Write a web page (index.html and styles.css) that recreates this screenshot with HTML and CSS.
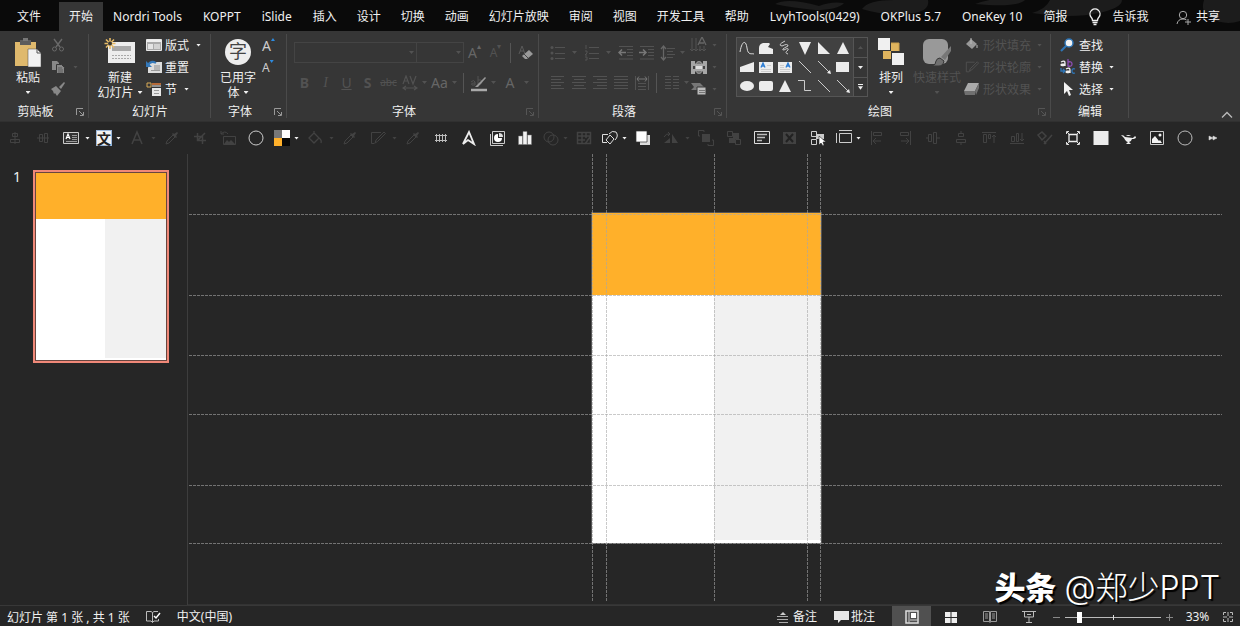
FILE: index.html
```html
<!DOCTYPE html>
<html lang="zh-CN">
<head>
<meta charset="utf-8">
<title>演示文稿</title>
<link rel="stylesheet" href="styles.css">
</head>
<body>
<svg class="sprite" aria-hidden="true">
  <symbol id="dropper" viewBox="0 0 16 16"><path d="M2 14l1-3 6-6 2 2-6 6z" fill="none" stroke="currentColor"/><path d="M8 4l4 4 1-1-1-1 2-3-1-1-3 2-1-1z" fill="currentColor"/></symbol>
  <symbol id="launch" viewBox="0 0 8 8"><path d="M.5 7V.5H7M3 3l4 4M7.500 4v3.500H4" fill="none" stroke="currentColor"/></symbol>
  <symbol id="align" viewBox="0 0 16 16"><path d="M1 1.500h13M1 4.500h10M1 7.500h13M1 10.500h10M1 13.500h13" stroke="currentColor"/></symbol>
  <symbol id="bucket" viewBox="0 0 16 16"><path d="M2 8l5-5 5 5-5 5zM7 3V1M12 8q3 2 2 5" fill="none" stroke="currentColor" stroke-width="1.300"/></symbol>
  <symbol id="pencilbox" viewBox="0 0 16 16"><path d="M11 2.500H1.500v11h3M5 13l1-3 8-8 1.500 1.500-8 8z" fill="none" stroke="currentColor"/></symbol>
</svg>

<nav class="tabs" aria-label="功能区选项卡">
  <svg class="tabs-art" viewBox="0 0 470 31" aria-hidden="true"><path d="M5 4q12-7 44 2 12-5 25-3-6 7-29 7-28-3-40-6zM92 9q6-9 32-9h34q2 10-13 13-28 4-53-4zM205 4q20-8 50-4-8 8-50 4zM280 0q-4 9-18 13 40 6 67 0 23-5 23-13zM434 0q-4 12 6 18 15 8 30 3V0z"/></svg>
  <button class="tab tab-file">文件</button>
  <button class="tab tab-on">开始</button>
  <button class="tab latin">Nordri Tools</button>
  <button class="tab latin">KOPPT</button>
  <button class="tab latin">iSlide</button>
  <button class="tab">插入</button>
  <button class="tab">设计</button>
  <button class="tab">切换</button>
  <button class="tab">动画</button>
  <button class="tab">幻灯片放映</button>
  <button class="tab">审阅</button>
  <button class="tab">视图</button>
  <button class="tab">开发工具</button>
  <button class="tab latin">帮助</button>
  <button class="tab latin">LvyhTools(0429)</button>
  <button class="tab latin">OKPlus 5.7</button>
  <button class="tab latin">OneKey 10</button>
  <button class="tab">简报</button>
  <button class="tab tab-icon"><svg width="14" height="18" viewBox="0 0 14 18"><path d="M4.500 12.500q0-2-1.500-3.500a5 5 0 1 1 8 0q-1.500 1.500-1.500 3.500zM4.500 14.500h5M5.500 16.500h3" fill="none" stroke="currentColor" stroke-width="1.300"/></svg>告诉我</button>
  <button class="tab tab-icon tab-share"><svg width="16" height="16" viewBox="0 0 16 16"><circle cx="7" cy="6" r="3.700" fill="none" stroke="#aaa"/><path d="M1 15q1-5 6-5 2 0 3.500 1M12 10v6M9 13h6" fill="none" stroke="#aaa"/></svg>共享</button>
</nav>

<section class="ribbon" aria-label="开始">
  <div class="group g-clip">
    <div class="body">
      <button class="big"><svg width="28" height="30" viewBox="0 0 28 30"><path d="M1 4h21v24H1z" fill="#dfb96d"/><path d="M6 2h11v5H6z" fill="#5c5c5c"/><path d="M9 0h5v3H9z" fill="#777"/><path d="M14 11h9l4 4v14H14z" fill="#f2f2f2" stroke="#444" stroke-width=".5"/><path d="M23 11v4h4" fill="none" stroke="#555"/></svg><span>粘贴</span><i class="caret"></i></button>
      <div class="list dim">
        <button class="row" aria-label="剪切"><svg width="14" height="14" viewBox="0 0 14 14"><path d="M3 1l6 8M11 1L5 9" stroke="currentColor" stroke-width="1.400"/><circle cx="3.500" cy="11" r="2" fill="none" stroke="currentColor"/><circle cx="10.500" cy="11" r="2" fill="none" stroke="currentColor"/></svg></button>
        <button class="row mid" aria-label="复制"><svg width="14" height="14" viewBox="0 0 14 14"><path d="M1 1h5l2 2v7H1z" fill="currentColor"/><path d="M5.500 4.500h5l3 3v6h-8z" fill="currentColor" stroke="#363636"/><path d="M7 8h4M7 10h5M7 12h5" stroke="#4a4a4a" stroke-width=".7"/></svg><i class="caret faint"></i></button>
        <button class="row mid" aria-label="格式刷"><svg width="14" height="14" viewBox="0 0 14 14"><path d="M0 7l5-3 5 5-4 5-2-3-1 1-1-3z" fill="currentColor"/><path d="M8 5l5-5 1 1-4 6z" fill="currentColor"/></svg></button>
      </div>
    </div>
    <div class="foot"><span>剪贴板</span><button aria-label="剪贴板设置"><svg width="8" height="8"><use href="#launch"/></svg></button></div>
  </div>

  <div class="group g-slides">
    <div class="body">
      <button class="big"><svg width="32" height="30" viewBox="0 0 32 30"><path d="M4 4h27v21H4z" fill="#ededed"/><path d="M8 8h19v5H8z" fill="#a9a9a9"/><path d="M8 17.500h19M8 20.500h19" stroke="#a9a9a9" stroke-dasharray="2 1"/><path d="M6 0v11M.5 5.500h11M2 1.500l8 8M10 1.500l-8 8" stroke="#e5ba66" stroke-width="1.600"/><circle cx="6" cy="5.500" r="2" fill="#363636"/></svg><span>新建</span><span>幻灯片<i class="caret"></i></span></button>
      <div class="list">
        <button class="row"><svg width="16" height="14" viewBox="0 0 16 14"><path d="M.5 1.500h15v11H.5z" fill="#aaa" stroke="#e8e8e8"/><path d="M1 3h14" stroke="#eee" stroke-width="2"/><path d="M2 6h5v5H2z" fill="#e4e4e4"/><path d="M8 6h6v5H8z" fill="#d2d2d2"/></svg>版式<i class="caret"></i></button>
        <button class="row"><svg width="16" height="14" viewBox="0 0 16 14"><path d="M4 2h12v11H2V8z" fill="#ddd"/><path d="M8 5h6v5H8z" fill="#b5b5b5"/><path d="M5 10.500h9" stroke="#999"/><path d="M2 5q3-5 8-2" fill="none" stroke="#3478b9" stroke-width="2"/><path d="M0 1v6h6z" fill="#3478b9"/></svg>重置</button>
        <button class="row"><svg width="16" height="14" viewBox="0 0 16 14"><path d="M1 1h4v4H1z" fill="none" stroke="#d8aa56"/><path d="M6 2h9" stroke="#e07b39" stroke-width="1.500"/><path d="M6 4h9" stroke="#eee"/><path d="M6 6h9v8H6z" fill="#e8e8e8"/><path d="M8 8.500h5M8 11.500h5" stroke="#999"/></svg>节<i class="caret"></i></button>
      </div>
    </div>
    <div class="foot"><span>幻灯片</span></div>
  </div>

  <div class="group g-used">
    <div class="body">
      <button class="big"><b class="disc">字</b><span>已用字</span><span>体<i class="caret"></i></span></button>
      <div class="list">
        <button class="row grow">A<i class="up"></i></button>
        <button class="row grow">A<i class="up down"></i></button>
      </div>
    </div>
    <div class="foot"><span>字体</span><button aria-label="字体设置"><svg width="8" height="8"><use href="#launch"/></svg></button></div>
  </div>

  <div class="group g-font">
    <div class="body stack faint">
      <div class="line">
        <button class="combo combo-name" aria-label="字体名称"><i class="caret"></i></button>
        <button class="combo combo-size" aria-label="字号"><i class="caret"></i></button>
        <button class="ico large soft">A<sup>▴</sup></button>
        <button class="ico">A<sup>▾</sup></button>
        <i class="bar"></i>
        <button class="ico mid" aria-label="清除格式"><svg width="16" height="16" viewBox="0 0 16 16"><path d="M1 9L4 1l3 8M2 6h4" fill="none" stroke="#5a5a5a"/><path d="M4 11l7-6 4 4-6 5H7z" fill="#999"/><path d="M6 9l4 4" stroke="#444"/></svg></button>
      </div>
      <div class="line">
        <button class="ico large"><b>B</b></button>
        <button class="ico large serif"><em>I</em></button>
        <button class="ico large"><u>U</u></button>
        <button class="ico large"><b>S</b></button>
        <button class="ico small"><s>abc</s></button>
        <button class="ico" aria-label="字符间距"><svg width="16" height="16" viewBox="0 0 16 16"><path d="M1 9l3-8 3 8M2 6h4M8 1l3 8 3-8M1 13h14M4 11l-3 2 3 2M12 11l3 2-3 2" fill="none" stroke="currentColor" stroke-width="1.200"/></svg></button><i class="caret"></i>
        <button class="ico large soft">Aa</button><i class="caret"></i>
        <i class="bar"></i>
        <button class="ico" aria-label="突出显示"><svg width="18" height="18" viewBox="0 0 18 18"><path d="M1 8q3-3 4 0v3H2q-2-2 3-2M8 2v8q4 1 4-2t-4-2" fill="none" stroke="currentColor"/><path d="M5 13l10-10 1 1-8 9z" fill="#999"/><path d="M1 16h16" stroke="#aaa" stroke-width="2.500"/></svg></button><i class="caret"></i>
        <button class="ico large soft wide">A</button><i class="caret"></i>
      </div>
    </div>
    <div class="foot faint-btn"><span>字体</span><button aria-label="字体对话框"><svg width="8" height="8"><use href="#launch"/></svg></button></div>
  </div>

  <div class="group g-para">
    <div class="body faint">
      <div class="stack para-main">
        <div class="line">
          <button class="ico" aria-label="项目符号"><svg width="16" height="16" viewBox="0 0 16 16"><path d="M5 2.500h10M5 8.500h10M5 13.500h10" stroke="currentColor"/><g fill="currentColor"><circle cx="2" cy="2.500" r="1.500"/><circle cx="2" cy="8" r="1.500"/><circle cx="2" cy="13.500" r="1.500"/></g></svg></button><i class="caret wide-caret"></i>
          <button class="ico" aria-label="编号"><svg width="16" height="16" viewBox="0 0 16 16"><path d="M5 2.500h10M5 8.500h10M5 13.500h10M2 0v4M1 6h2v2l-2 2h2M1 12h2v3H1" fill="none" stroke="currentColor"/></svg></button><i class="caret wide-caret"></i>
          <button class="ico" aria-label="减少缩进"><svg width="16" height="16" viewBox="0 0 16 16"><path d="M1 1.500h14M9 4.500h6M9 7.500h6M9 10.500h6M1 14h14" stroke="currentColor"/><path d="M8 7.500H1M4 4.500l-3 3 3 3" fill="none" stroke="#777" stroke-width="1.500"/></svg></button>
          <button class="ico" aria-label="增加缩进"><svg width="16" height="16" viewBox="0 0 16 16"><path d="M1 1.500h14M9 4.500h6M9 7.500h6M9 10.500h6M1 14h14" stroke="currentColor"/><path d="M0 7.500h7M4 4.500l3 3-3 3" fill="none" stroke="#777" stroke-width="1.500"/></svg></button>
          <button class="ico" aria-label="行距"><svg width="16" height="16" viewBox="0 0 16 16"><path d="M7 3.500h8M7 6.500h6M7 9.500h8M7 12.500h6" stroke="currentColor"/><path d="M3.500 1v14M1 4l2.500-3L6 4M1 12l2.500 3L6 12" fill="none" stroke="#666" stroke-width="1.300"/></svg></button><i class="caret"></i>
        </div>
        <div class="line">
          <button class="ico" aria-label="左对齐"><svg width="16" height="16"><use href="#align"/></svg></button>
          <button class="ico" aria-label="居中"><svg width="16" height="16" viewBox="0 0 16 16"><path d="M1 1.500h14M3 4.500h10M1 7.500h14M3 10.500h10M1 13.500h14" stroke="currentColor"/></svg></button>
          <button class="ico" aria-label="右对齐"><svg width="16" height="16" viewBox="0 0 16 16"><path d="M1 1.500h14M5 4.500h10M1 7.500h14M5 10.500h10M1 13.500h14" stroke="currentColor"/></svg></button>
          <button class="ico" aria-label="两端对齐"><svg width="16" height="16" viewBox="0 0 16 16"><path d="M1 1.500h14M1 4.500h14M1 7.500h14M1 10.500h14M1 13.500h14" stroke="currentColor"/></svg></button>
          <button class="ico" aria-label="分散对齐"><svg width="16" height="16" viewBox="0 0 16 16"><path d="M1.500 1v14M14.500 1v14M4 8.500h8M4 11.500h8M4 14.500h8" stroke="currentColor"/><path d="M3 4h10M5 1.500L3 4l2 2.500M11 1.500L13 4l-2 2.500" fill="none" stroke="#777"/></svg></button>
          <i class="bar"></i>
          <button class="ico" aria-label="分栏"><svg width="16" height="16" viewBox="0 0 16 16"><path d="M1 1.500h6M1 4.500h6M1 7.500h6M1 10.500h6M1 13.500h6M9 1.500h6M9 4.500h6M9 7.500h6M9 10.500h6M9 13.500h6" stroke="currentColor"/></svg></button><i class="caret"></i>
        </div>
      </div>
      <div class="list">
        <button class="row slim" aria-label="文字方向"><svg width="18" height="16" viewBox="0 0 18 16"><path d="M2 1v13M6 1v13M10 9v5M14 9v5M0 12l2 2 2-2M4 12l2 2 2-2M9 12l1 2 2-2M12 12l2 2 2-2" fill="none" stroke="currentColor"/><path d="M8 8l4-8 4 8M9 6h5" fill="none" stroke="#666" stroke-width="1.300"/></svg><i class="caret"></i></button>
        <button class="row slim" aria-label="对齐文本"><svg width="18" height="16" viewBox="0 0 18 16"><path d="M1 2h16v13H1z" fill="#a6a6a6"/><path d="M5 2h8v3l-4-4-4 4zM5 15h8v-3l-4 4-4-4z" fill="#363636"/><path d="M9 2L6 5h6zM9 15l-3-3h6z" fill="#777"/><path d="M3 7h2v3H3zM13 7h2v3h-2z" fill="#444"/><path d="M6 8.500h6" stroke="#ddd" stroke-width="3"/></svg><i class="caret"></i></button>
        <button class="row slim" aria-label="转换为 SmartArt"><svg width="18" height="16" viewBox="0 0 18 16"><path d="M1 2h9l4 4-4 3H1l3-3z" fill="#777"/><path d="M7 6h9v8H7z" fill="#bbb" stroke="#363636"/><path d="M9 9.500h6M9 11.500h6" stroke="#777"/></svg><i class="caret"></i></button>
      </div>
    </div>
    <div class="foot faint-btn"><span>段落</span><button aria-label="段落设置"><svg width="8" height="8"><use href="#launch"/></svg></button></div>
  </div>

  <div class="group g-draw">
    <div class="body">
      <div class="gallery">
        <div class="shapes">
          <svg viewBox="0 0 18 18"><path d="M2 13C4 1 8 1 9 9s5 5 7 6" fill="none" stroke="#ddd"/></svg>
          <svg viewBox="0 0 18 18"><path d="M2 9q0-4 4-5h6l1 1-2 3 5 2v5H2z"/></svg>
          <svg viewBox="0 0 18 18"><path d="M9 2q-8 4-3 5 6-3 6 0-8 4-4 4 5-3 4 0-4 3 0 4" fill="none" stroke="#ccc"/></svg>
          <svg viewBox="0 0 18 18"><path d="M3 3h12L9 16z"/></svg>
          <svg viewBox="0 0 18 18"><path d="M3 3v12h12z"/></svg>
          <svg viewBox="0 0 18 18"><path d="M9 3l6 12H3z"/></svg>
          <svg viewBox="0 0 18 18"><path d="M2 9l14-5v10H2z"/></svg>
          <svg viewBox="0 0 18 18"><path d="M2 4h14v11H2z"/><path d="M4 9.500l2-4.500 2 4.500M4.500 8h3" fill="none" stroke="#2b7cd3" stroke-width="1.300"/><path d="M10 7.500h4M4 11.500h10M4 13.500h10" stroke="#ccc"/></svg>
          <svg viewBox="0 0 18 18"><path d="M2 4h14v11H2z"/><path d="M10 9.500l2-4.500 2 4.500M10.500 8h3" fill="none" stroke="#2b7cd3" stroke-width="1.300"/><path d="M4 7.500h4M4 9.500h4M4 11.500h10M4 13.500h10" stroke="#ccc"/></svg>
          <svg viewBox="0 0 18 18"><path d="M3 3l12 12" stroke="#ccc"/></svg>
          <svg viewBox="0 0 18 18"><path d="M3 3l12 12" stroke="#ccc"/><path d="M16 16l-4-1 3-3z"/></svg>
          <svg viewBox="0 0 18 18"><path d="M2 4h13v10H2z"/></svg>
          <svg viewBox="0 0 18 18"><ellipse cx="9" cy="9" rx="7" ry="5"/></svg>
          <svg viewBox="0 0 18 18"><rect x="2" y="4" width="14" height="10" rx="2"/></svg>
          <svg viewBox="0 0 18 18"><path d="M9 3l6 12H3z"/></svg>
          <svg viewBox="0 0 18 18"><path d="M2 3.500h6.500v10H15" fill="none" stroke="#ccc"/></svg>
          <svg viewBox="0 0 18 18"><path d="M3 3l12 12" stroke="#ccc"/></svg>
          <svg viewBox="0 0 18 18"><path d="M3 3l12 12" stroke="#ccc"/><path d="M16 16l-4-1 3-3z"/></svg>
        </div>
        <div class="scroll"><button aria-label="上一行" class="faint"><i class="caret flip"></i></button><button aria-label="下一行"><i class="caret"></i></button><button aria-label="更多形状"><i class="caret more"></i></button></div>
      </div>
      <button class="big"><svg width="28" height="30" viewBox="0 0 28 30"><path d="M14 5h8v8h-8zM6 13h8v8H6z" fill="#dfb45e"/><path d="M1 0h12v12H1zM15 15h12v12H15z" fill="#f0f0f0"/><path d="M14 5h8v8" fill="none" stroke="#c99e4c"/></svg><span>排列</span><i class="caret"></i></button>
      <button class="big faint"><svg width="30" height="30" viewBox="0 0 30 30"><rect x="1" y="1" width="25" height="25" rx="6" fill="#999"/><path d="M10 28q4-1 4-5 1-3 4-3l4 3q-1 5-5 5z" fill="#707070" stroke="#363636"/><path d="M19 19L29 8v5l-6 9z" fill="#777"/></svg><span>快速样式</span><i class="caret"></i></button>
      <div class="list faint">
        <button class="row tight"><svg width="18" height="14" viewBox="0 0 18 14"><path d="M3 6l5-5 6 5-5 5z" fill="#999"/><path d="M8 0v6M14 7v3" stroke="#bbb"/></svg>形状填充<i class="caret"></i></button>
        <button class="row tight"><svg width="18" height="14"><use href="#pencilbox"/></svg>形状轮廓<i class="caret"></i></button>
        <button class="row tight"><svg width="18" height="14" viewBox="0 0 18 14"><path d="M5 1h11l-4 8H1z" fill="#aaa"/><path d="M1 9h11v4H2zM12 9l4-8v5l-3 7z" fill="#707070"/></svg>形状效果<i class="caret"></i></button>
      </div>
    </div>
    <div class="foot faint-btn"><span>绘图</span><button aria-label="形状格式"><svg width="8" height="8"><use href="#launch"/></svg></button></div>
  </div>

  <div class="group g-edit">
    <div class="body">
      <div class="list">
        <button class="row tight"><svg width="18" height="14" viewBox="0 0 18 14"><circle cx="10" cy="5" r="4" fill="#f2f2f2" stroke="#2e75b6" stroke-width="1.500"/><path d="M7 8l-5 5" stroke="#2e75b6" stroke-width="2.200"/></svg>查找</button>
        <button class="row tight"><svg width="18" height="16" viewBox="0 0 18 16"><g fill="none" stroke-width="1.300"><path d="M2 3q4-2 4 1v3M6 5q-4 0-4 1t4 0" stroke="#eee"/><path d="M9 0v7q4 1 4-2T9 3" stroke="#8e4eb5"/><path d="M7 10q4-2 4 1v3M11 12q-4 0-4 1t4 0" stroke="#eee"/><path d="M16 10q-3-1-3 2t3 2M2 9v3h4M4 10l2 2-2 2" stroke="#2e75b6"/></g></svg>替换<i class="caret far"></i></button>
        <button class="row tight"><svg width="18" height="16" viewBox="0 0 18 16"><path d="M5 1v12l3-3 2 5 2-1-2-5h4z" fill="#f2f2f2"/></svg>选择<i class="caret"></i></button>
      </div>
    </div>
    <div class="foot"><span>编辑</span></div>
  </div>
  <button class="collapse" aria-label="折叠功能区"><svg width="12" height="8" viewBox="0 0 12 8"><path d="M1 6.500l5-5 5 5" fill="none" stroke="#bbb" stroke-width="1.300"/></svg></button>
</section>

<div class="quick" role="toolbar" aria-label="快速访问工具栏">
  <button class="q off" aria-label="水平居中"><svg viewBox="0 0 16 16"><path d="M8 2v12M5.500 3.500h5v3h-5zM3.500 9.500h9v3h-9z" fill="none" stroke="currentColor"/></svg></button>
  <button class="q off" aria-label="垂直居中"><svg viewBox="0 0 16 16"><path d="M2 8h12M4.500 4.500h3v7h-3zM9.500 3.500h3v9h-3z" fill="none" stroke="currentColor"/></svg></button>
  <button class="q" aria-label="文本框"><svg viewBox="0 0 16 16"><path d="M.5 2.500h15v11H.5z" fill="#333" stroke="#ccc"/><path d="M3 9l2-5 2 5M3.500 7.500h3" fill="none" stroke="#fff" stroke-width="1.200"/><path d="M9 5.500h5M9 7.500h5M9 9.500h5M3 11.500h11" stroke="#999"/></svg></button><i class="caret"></i>
  <button class="q narrow" aria-label="文字"><b class="wen">文</b></button><i class="caret"></i>
  <button class="q off" aria-label="字体颜色"><svg viewBox="0 0 16 16"><path d="M3 14L8 2l5 12M5 10h6" fill="none" stroke="currentColor" stroke-width="1.500"/></svg></button><i class="caret off"></i>
  <button class="q off" aria-label="取色器"><svg><use href="#dropper"/></svg></button>
  <button class="q off" aria-label="裁剪"><svg viewBox="0 0 16 16"><path d="M5.500 3v7.500H14M2 6.500h8.500V14M13 3l-7 7" fill="none" stroke="currentColor" stroke-width="1.500"/></svg></button>
  <button class="q off" aria-label="重设图片"><svg viewBox="0 0 16 16"><path d="M3.500 8V6.500h12v8h-12zM1 4q4-4 7 0M1 1v3h3" fill="none" stroke="currentColor"/><path d="M4 14l3-4 2 2 2-2 4 4z" fill="currentColor"/></svg></button>
  <button class="q" aria-label="圆形"><svg viewBox="0 0 16 16"><circle cx="8" cy="8" r="7" fill="none" stroke="#ccc"/></svg></button>
  <button class="q narrow" aria-label="配色"><svg viewBox="0 0 16 16"><path d="M0 0h8v8H0z" fill="#777"/><path d="M8 0h8v8H8z" fill="#fff"/><path d="M0 8h8v8H0z" fill="#ffb02a"/><path d="M8 8h8v8H8z" fill="#080808"/></svg></button><i class="caret"></i>
  <button class="q off" aria-label="形状填充"><svg><use href="#bucket"/></svg></button><i class="caret off"></i>
  <button class="q off" aria-label="填充取色"><svg><use href="#dropper"/></svg></button>
  <button class="q off" aria-label="形状轮廓"><svg><use href="#pencilbox"/></svg></button><i class="caret off"></i>
  <button class="q off" aria-label="轮廓取色"><svg><use href="#dropper"/></svg></button>
  <button class="q" aria-label="参考线"><svg viewBox="0 0 16 16"><path d="M3.500 4v8M6.500 4v8M9.500 4v8M12.500 4v8M2 5.500h12M2 10.500h12" stroke="#bbb"/></svg></button>
  <button class="q" aria-label="艺术字"><svg viewBox="0 0 16 16"><path d="M2 14L8 2l5 12-6-4z" fill="none" stroke="#eee" stroke-width="1.800"/></svg></button>
  <button class="q" aria-label="图表副本"><svg viewBox="0 0 16 16"><path d="M3.500 1.500h12v12h-12zM1.500 4v11.500H14" fill="none" stroke="#ccc"/><path d="M9 4a4 4 0 1 0 4 4H9z" fill="#fff"/><path d="M10 3a4 4 0 0 1 4 4h-4z" fill="#ddd"/></svg></button>
  <button class="q" aria-label="图表"><svg viewBox="0 0 16 16"><path d="M1.500 6h4v8.500h-4zM6 1.500h4v13H6zM10.500 5h4v9.500h-4z" fill="#f2f2f2" stroke="#777" stroke-width=".5"/></svg></button>
  <button class="q narrow off" aria-label="合并形状"><svg viewBox="0 0 16 16"><circle cx="6" cy="7" r="5" fill="none" stroke="currentColor"/><circle cx="10" cy="10" r="5" fill="none" stroke="currentColor"/></svg></button><i class="caret off"></i>
  <button class="q off" aria-label="绘制表格"><svg viewBox="0 0 16 16"><path d="M1.500 2.500h13v11h-13zM1 6h14M1 10h8M6 3v11M10 3v5M9 14l5-7" fill="none" stroke="currentColor" stroke-width="1.500"/></svg></button>
  <button class="q narrow" aria-label="编辑形状"><svg viewBox="0 0 16 16"><path d="M6 4.500H.5v8H5M8 5l4 4-4 5-4-4zM7 4q3-4 7-2 3 4-1 8" fill="none" stroke="#ddd"/></svg></button><i class="caret"></i>
  <button class="q" aria-label="置于顶层"><svg viewBox="0 0 16 16"><path d="M5 5h10v10H5z" fill="#ddd"/><path d="M1 1h11v11H1z" fill="#fff" stroke="#333" stroke-width=".7"/></svg></button>
  <button class="q off" aria-label="旋转"><svg viewBox="0 0 16 16"><path d="M1 13h6V8zM9 13h6L9 4z" fill="currentColor"/><path d="M1 7q2-4 6-3M5 2l2 2-2 2" fill="none" stroke="currentColor"/></svg></button><i class="caret off"></i>
  <button class="q off" aria-label="上移一层"><svg viewBox="0 0 16 16"><path d="M4 4h8v8H4z" fill="currentColor"/><path d="M2 6H.5V.5H6V2M14 10h1.500v5.500H10V14" fill="none" stroke="currentColor"/></svg></button>
  <button class="q off" aria-label="组合"><svg viewBox="0 0 16 16"><path d="M1.500 1.500h5v5h-5zM9.500 9.500h5v5h-5z" fill="none" stroke="currentColor"/><path d="M7 3h6v6H9v4H3V8h4z" fill="currentColor"/></svg></button>
  <button class="q" aria-label="选择窗格"><svg viewBox="0 0 16 16"><path d="M.5 1.500h15v12H.5z" fill="none" stroke="#ddd"/><path d="M3 4.500h10M3 7.500h8M3 10.500h5" stroke="#bbb" stroke-width="1.300"/></svg></button>
  <button class="q off" aria-label="删除"><svg viewBox="0 0 16 16"><path d="M1 2h13v12H1z" fill="currentColor"/><path d="M4 4l7 8M11 4l-7 8" stroke="#222" stroke-width="2"/></svg></button>
  <button class="q" aria-label="选择对象"><svg viewBox="0 0 16 16"><path d="M1.500 1.500h5v5h-5zM1.500 9.500h5v5h-5z" fill="none" stroke="#ccc"/><path d="M6 4h8v5H6z" fill="#ccc"/><path d="M9 6v9l2-2 2 3 1-1-1-3h3z" fill="#fff" stroke="#222" stroke-width=".6"/></svg></button>
  <button class="q narrow" aria-label="幻灯片大小"><svg viewBox="0 0 16 16"><path d="M3.500 3.500h12v9h-12zM3 .5h13M.5 3v10" fill="none" stroke="#ccc"/></svg></button><i class="caret"></i>
  <button class="q off" aria-label="左对齐"><svg viewBox="0 0 16 16"><path d="M2.500 1v14M4.500 2.500h8v3h-8zM4 11h8M7 8l-3 3 3 3" fill="none" stroke="currentColor"/></svg></button>
  <button class="q off" aria-label="右对齐"><svg viewBox="0 0 16 16"><path d="M13.500 1v14M3.500 2.500h8v3h-8zM4 11h8M9 8l3 3-3 3" fill="none" stroke="currentColor"/></svg></button>
  <button class="q off" aria-label="横向分布"><svg viewBox="0 0 16 16"><path d="M1 8h2M12 8h3M3.500 4.500h3v7h-3zM8.500 2.500h3v11h-3z" fill="none" stroke="currentColor"/></svg></button>
  <button class="q off" aria-label="纵向分布"><svg viewBox="0 0 16 16"><path d="M8 1v2M8 12v3M5.500 3.500h5v3h-5zM3.500 9.500h9v3h-9z" fill="none" stroke="currentColor"/></svg></button>
  <button class="q off" aria-label="顶端对齐"><svg viewBox="0 0 16 16"><path d="M1 2.500h14M2.500 4.500h3v8h-3zM7.500 4.500h2v4h-2zM13 13V5M11 7l2-2 2 2" fill="none" stroke="currentColor"/></svg></button>
  <button class="q off" aria-label="底端对齐"><svg viewBox="0 0 16 16"><path d="M1 13.500h14M2.500 6.500h3v5h-3zM7.500 3.500h2v8h-2zM13 3v8M11 9l2 2 2-2" fill="none" stroke="currentColor"/></svg></button>
  <button class="q off" aria-label="复制格式"><svg viewBox="0 0 16 16"><path d="M1 5l4-3 4 4-4 4zM7 14l8-9M7 11l2 3" fill="none" stroke="currentColor" stroke-width="1.500"/></svg></button>
  <button class="q" aria-label="适应"><svg viewBox="0 0 16 16"><path d="M4 4.500h8v7H4z" fill="none" stroke="#eee" stroke-width="1.300"/><path d="M1.500 4V1.500H4M12 1.500h2.500V4M14.500 12v2.500H12M4 14.500H1.500V12M2 2l2 2M14 2l-2 2M2 14l2-2M14 14l-2-2" fill="none" stroke="#ddd"/></svg></button>
  <button class="q" aria-label="矩形"><svg viewBox="0 0 16 16"><path d="M.5 1h15v14H.5z" fill="#ececec"/></svg></button>
  <button class="q" aria-label="神灯"><svg viewBox="0 0 16 16"><path d="M0 5q3 0 4 2l8 1q2-3 3-1 0 2-4 2-1 3-3 3l2 2H5l2-2q-2 0-4-4Q1 6 0 5zM5 6q2-2 5 0z" fill="#eee"/></svg></button>
  <button class="q" aria-label="图片"><svg viewBox="0 0 16 16"><path d="M1.500 1.500h13v13h-13z" fill="#222" stroke="#ccc"/><path d="M3 13V9l3-3 4 5 1-1 2 3z" fill="#f2f2f2"/><circle cx="11" cy="5" r="1.500" fill="#f2f2f2"/></svg></button>
  <button class="q" aria-label="椭圆"><svg viewBox="0 0 16 16"><circle cx="8" cy="8" r="7" fill="none" stroke="#bbb"/></svg></button>
  <button class="q" aria-label="更多命令"><svg viewBox="0 0 16 16"><path d="M4 6l4 2-4 2zM8 6l4 2-4 2z" fill="#ddd" stroke="#ddd" stroke-width=".5"/></svg></button>
</div>

<main class="work">
  <aside class="thumbs">
    <span class="num">1</span>
    <button class="thumb" aria-label="幻灯片 1"><span class="page"><span class="page-top"></span><span class="page-side"></span></span></button>
  </aside>
  <section class="stage" aria-label="幻灯片编辑区">
    <div class="page slide"><div class="page-top"></div><div class="page-side"></div></div>
    <i class="gh h1"></i><i class="gh h2"></i><i class="gh h3"></i><i class="gh h4"></i><i class="gh h5"></i><i class="gh h6"></i>
    <i class="gv v1"></i><i class="gv v2"></i><i class="gv v3"></i><i class="gv v4"></i><i class="gv v5"></i>
  </section>
</main>

<footer class="status">
  <span>幻灯片 第 1 张 , 共 1 张</span>
  <button class="s-book" aria-label="拼写检查"><svg width="16" height="14" viewBox="0 0 16 14"><path d="M7.500 2.500v10L6 11H1.500V1.500H6zM7.500 2.500L9 1.500h4M7.500 12.500L9 11h4.500V9" fill="none" stroke="#bbb"/><path d="M9 6l2 2 4-5" fill="none" stroke="#fff" stroke-width="1.500"/></svg></button>
  <button>中文(中国)</button>
  <span class="push"></span>
  <button class="s-notes"><svg width="12" height="12" viewBox="0 0 12 12"><path d="M0 5.500h11M0 8.500h11M2 11.500h9" stroke="#aaa"/><path d="M3 4l3-3 3 3z" fill="#ccc"/></svg>备注</button>
  <button class="s-comments"><svg width="15" height="12" viewBox="0 0 15 12"><path d="M0 0h15v9H7l-3 3V9H0z" fill="#e8e8e8"/></svg>批注</button>
  <button class="view on" aria-label="普通视图"><svg width="14" height="14" viewBox="0 0 14 14"><path d="M1 1h12v12H1z" fill="none" stroke="#ddd" stroke-width="1.500"/><path d="M4 1v12M5 10h8" stroke="#ccc"/><path d="M6 3h5v5H6z" fill="#fff"/></svg></button>
  <button class="view" aria-label="幻灯片浏览"><svg width="14" height="14" viewBox="0 0 14 14"><path d="M1 2h5.500v5H1zM7.500 2H13v5H7.500zM1 8h5.500v5H1zM7.500 8H13v5H7.500z" fill="#eee"/></svg></button>
  <button class="view" aria-label="阅读视图"><svg width="14" height="14" viewBox="0 0 14 14"><path d="M.5 1.500h6v10h-6zM7.500 1.500h6v10h-6zM7 2v11M2 4h3M2 6h3M2 8h3M9 4h3M9 6h3M9 8h3" fill="none" stroke="#999"/></svg></button>
  <button class="view" aria-label="幻灯片放映"><svg width="14" height="14" viewBox="0 0 14 14"><path d="M0 1.500h14M2.500 2v5h9V2M7 7v5M4 12.500h6M5 4.500h4" fill="none" stroke="#bbb"/></svg></button>
  <button class="zoom-btn" aria-label="缩小"><svg width="9" height="9" viewBox="0 0 9 9"><path d="M1 4.500h7" stroke="#888"/></svg></button>
  <input class="zoom" type="range" min="10" max="400" value="60" aria-label="显示比例">
  <button class="zoom-btn" aria-label="放大"><svg width="9" height="9" viewBox="0 0 9 9"><path d="M1 4.500h7M4.500 1v7" stroke="#888"/></svg></button>
  <button class="pct">33%</button>
  <button aria-label="适应窗口"><svg width="12" height="12" viewBox="0 0 12 12"><path d="M1.500 4V1.500H4M8 1.500h2.500V4M10.500 8v2.500H8M4 10.500H1.500V8M6 1v4M6 7v4M1 6h4M7 6h4" fill="none" stroke="#bbb"/></svg></button>
</footer>
<div class="mark"><b>头条</b><span>@郑少PPT</span></div>
</body>
</html>
```

FILE: styles.css
```css
* { box-sizing: border-box; }
body {
  margin: 0;
  min-height: 100vh;
  display: flex;
  flex-direction: column;
  position: relative;
  overflow: hidden;
  background: #262626;
  color: #f0f0f0;
  font: 12px/15px "Noto Sans", "Noto Sans CJK SC", sans-serif;
}
button {
  font: inherit;
  color: inherit;
  background: none;
  border: 0;
  padding: 0;
  margin: 0;
  display: flex;
  align-items: center;
  justify-content: center;
  white-space: nowrap;
  flex: none;
}
svg { flex: none; display: block; }
i { flex: none; }
.sprite { position: absolute; width: 0; height: 0; }

.caret {
  display: inline-block;
  width: 5px;
  height: 3px;
  background: currentColor;
  clip-path: polygon(0 0, 100% 0, 50% 100%);
}
.flip { transform: rotate(180deg); }
.more { height: 6px; clip-path: polygon(0 0, 100% 0, 100% 20%, 0 20%, 0 40%, 100% 40%, 50% 100%, 0 40%, 0 0); }
.mid { color: #888; }
.dim { color: #696969; }
.faint { color: #525252; }
.soft { color: #666; }

/* tabs */
.tabs {
  position: relative;
  display: flex;
  height: 31px;
  background: #0a0a0a;
}
.tabs-art { position: absolute; right: 0; top: 0; width: 470px; height: 31px; fill: #1c1c1c; }
.tab { position: relative; padding: 2px 10px 0; }
.tab.latin { padding-right: 11px; }
.tab-file { padding-left: 17px; padding-right: 18px; }
.tab-on { background: #363636; margin-top: 2px; padding-top: 0; }
.tab-icon { gap: 11px; }
.tab-share { margin-left: auto; padding-right: 20px; gap: 4px; }

/* ribbon */
.ribbon { display: flex; background: #363636; padding-top: 3px; border-bottom: 1px solid #303030; }
.group { display: flex; flex-direction: column; position: relative; flex: none; }
.group::after {
  content: "";
  position: absolute;
  right: 0;
  top: 0;
  bottom: 3px;
  width: 1px;
  background: #4a4a4a;
}
.body { display: flex; height: 66px; }
.foot { display: grid; grid-template-columns: 1fr auto; text-align: center; line-height: 18px; padding-top: 1px; margin-top: 2px; }
.foot button { width: 18px; color: #999; }
.foot.faint-btn button { color: #555; }
.g-clip { width: 89px; padding-left: 5px; }
.g-clip .foot { margin-left: -5px; }
.g-slides { width: 122px; padding-left: 8px; }
.g-slides .foot { margin-left: -8px; }
.g-used { width: 76px; padding-left: 4px; }
.g-used .foot { margin-left: -4px; }
.g-font { width: 252px; }
.g-para { width: 188px; }
.g-draw { width: 324px; padding-left: 9px; }
.g-draw .foot { margin-left: -9px; }
.g-edit { width: 78px; }

.big { width: 46px; flex-direction: column; justify-content: flex-start; padding-top: 4px; }
.big svg { margin-bottom: 2px; }
.big span { display: flex; align-items: center; gap: 4px; }
.big > .caret { margin-top: 6px; }
.disc {
  width: 26px;
  height: 26px;
  margin: 1px 0 5px;
  border-radius: 50%;
  background: #ededed;
  color: #444;
  font-size: 18px;
  font-weight: 400;
  line-height: 25px;
}
.list { display: grid; grid-template-rows: repeat(3, 22px); justify-items: start; }
.row { gap: 4px; padding-left: 4px; }
.list .row svg + .caret { margin-left: 4px; }
.g-clip .row { padding-left: 0; }
.g-slides .row { gap: 3px; padding-left: 3px; }
.grow { gap: 0; padding-left: 1px; font-size: 14px; color: #ccc; }
.grow + .grow { font-size: 12px; }
.up {
  width: 4px;
  height: 3px;
  margin-bottom: 11px;
  background: #2e8be0;
  clip-path: polygon(0 100%, 100% 100%, 50% 0);
}
.down { clip-path: polygon(0 0, 100% 0, 50% 100%); }
.list .slim { padding: 0 0 0 1px; gap: 0; }
.tight { gap: 2px; padding-left: 3px; }
.tight .caret { margin-left: 1px; }
.tight .far { margin-left: 8px; }
.g-edit .row { padding-left: 8px; }

.stack { display: flex; flex-direction: column; gap: 9px; padding: 8px 7px 0; }
.line { display: flex; align-items: center; height: 21px; }
.line .caret { margin: 0 2px; }
.line .wide-caret { margin: 0 4px; }
.ico { width: 21px; height: 21px; }
.ico sup { font-size: 8px; line-height: 8px; align-self: flex-start; }
.ico.wide { width: 24px; }
.large { font-size: 14px; }
.small { font-size: 10px; }
.serif { font-family: "Liberation Serif", serif; }
.combo { height: 21px; border: 1px solid #444; justify-content: flex-end; }
.combo-name { width: 123px; }
.combo-size { width: 47px; border-left: 0; }
.bar { width: 1px; height: 20px; margin: 0 4px; background: #555; }
.para-main { width: 150px; padding-left: 8px; padding-right: 0; }

.gallery { display: flex; width: 132px; height: 60px; margin-top: 3px; border: 1px solid #555; background: #414141; }
.shapes { flex: 1; display: grid; grid-template: repeat(3, 19px) / repeat(6, 1fr); place-items: center; }
.shapes svg { width: 18px; height: 18px; fill: #ececec; }
.scroll { display: grid; grid-template-rows: repeat(3, 1fr); width: 14px; border-left: 1px solid #555; background: #363636; }
.scroll button + button { border-top: 1px solid #555; }
.collapse { margin: auto 7px 2px auto; }

/* quick toolbar */
.quick { display: flex; align-items: center; height: 32px; padding-left: 1px; color: #eee; }
.q { width: 28px; height: 24px; }
.q svg { width: 16px; height: 16px; }
.narrow { width: 24px; }
.quick .caret { margin-right: 2px; }
.off { color: #424242; }
.wen { width: 16px; height: 16px; background: #f2f2f2; color: #222; line-height: 15px; font-size: 14px; border: 1px solid #9db7d8; display: grid; place-content: center; }

/* workspace */
.work { flex: 1; display: flex; }
.thumbs { flex: none; width: 188px; padding: 16px 18px 0 13px; display: flex; align-items: flex-start; gap: 12px; border-right: 1px solid #3d3d3d; }
.num { width: 8px; font-size: 14px; line-height: 14px; }
.thumb { width: 136px; height: 193px; border: 2px solid #f08878; padding: 1px; background: #684640; align-items: stretch; }
.page { display: grid; grid-template-columns: 122fr 107fr; grid-template-rows: 82fr 245fr 3fr; background: #fff; flex: 1; }
.page-top { grid-column: 1 / 3; background: #ffb02a; }
.page-side { grid-column: 2; background: #f1f1f1; }
.stage { flex: 1; position: relative; padding: 59px 16px 0 0; border-bottom: 1px solid #333; }
.slide { width: 229px; height: 330px; margin: 0 auto; outline: 1px solid #555; }
.gh, .gv { position: absolute; opacity: .6; }
.gh { left: 1px; right: 18px; height: 1px; background: repeating-linear-gradient(90deg, #a6a6a6 0 3px, transparent 3px 4px); }
.gv { top: 0; bottom: 2px; width: 1px; background: repeating-linear-gradient(#a6a6a6 0 3px, transparent 3px 4px); }
.h1 { top: 60px; }
.h2 { top: 141px; }
.h3 { top: 201px; }
.h4 { top: 260px; }
.h5 { top: 331px; }
.h6 { top: 389px; }
.v1 { left: calc(50% - 122px); }
.v2 { left: calc(50% - 108px); }
.v3 { left: 50%; }
.v4 { left: calc(50% + 93px); }
.v5 { left: calc(50% + 106px); }

/* status bar */
.status { display: flex; align-items: stretch; height: 21px; padding: 0 6px 0 7px; line-height: 24px; border-top: 1px solid #383838; }
.status button { gap: 4px; padding-top: 2px; }
.s-book { width: 47px; }
.push { flex: 1; }
.s-notes { margin-right: 17px; }
.s-comments { margin-right: 17px; }
.status .s-comments { gap: 2px; }
.view { width: 39px; }
.view.on { background: #505050; }
.zoom-btn { width: 17px; }
.zoom {
  appearance: none;
  align-self: center;
  width: 96px;
  height: 11px;
  margin: 2px 0 0;
  background:
    linear-gradient(#ddd, #ddd) 50% 50% / 1px 5px no-repeat,
    linear-gradient(#bbb, #bbb) 0 50% / 100% 1px no-repeat;
}
.zoom::-webkit-slider-thumb { appearance: none; width: 5px; height: 11px; background: #fff; }
.pct { width: 39px; margin-right: 5px; }

.mark {
  position: absolute;
  right: 20px;
  bottom: 21px;
  display: flex;
  align-items: center;
  gap: 8px;
  color: #fff;
  font: 300 32px/34px Inter, "Noto Sans CJK SC", sans-serif;
  text-shadow: 2px 2px 1px #000;
}
.mark b { font-size: 31px; font-weight: 900; }
```
